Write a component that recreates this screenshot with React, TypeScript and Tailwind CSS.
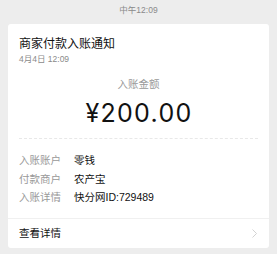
export default function App() {
  const rows = [
    ["入账账户", "零钱"],
    ["付款商户", "农产宝"],
    ["入账详情", "快分网ID:729489"],
  ];
  return (
    <div
      className="h-[254px] w-[277px] overflow-hidden bg-[#ededed] px-2"
      style={{ fontFamily: '"Liberation Sans", "Noto Sans CJK SC", sans-serif' }}
    >
      <div className="pt-[5px] text-center text-[8.5px] leading-[11px] text-[#8a8a8a]">中午12:09</div>
      <div className="mt-[8px] rounded-[3px] bg-white">
        <div className="px-[11px] pt-[12px]">
          <div className="text-[12px] leading-[16px] text-[#111]">商家付款入账通知</div>
          <div className="mt-[2px] text-[8.5px] leading-[11px] text-[#8a8a8a]">4月4日 12:09</div>
          <div className="mt-[13px] text-center text-[10.5px] leading-[13px] text-[#999]">入账金额</div>
          <div
            className="mt-[7px] pl-[1px] text-center text-[25px] leading-[30px] tracking-[1.3px] text-[#111]"
            style={{ fontFamily: 'Inter, "Liberation Sans", sans-serif' }}
          >
            ¥200.00
          </div>
          <div className="mt-[10px] border-t border-dashed border-[#e8e8e8]" />
          <div className="flex flex-col gap-[4.5px] pb-[14px] pt-[14px]">
            {rows.map(([k, v]) => (
              <div key={k} className="flex text-[10.5px] leading-[14px]">
                <span className="w-[55px] text-[#999]">{k}</span>
                <span className="text-[#111]">{v}</span>
              </div>
            ))}
          </div>
        </div>
        <div className="flex h-[30px] items-center justify-between border-t border-[#f0f0f0] px-[11px]">
          <span className="text-[10.5px] text-[#111]">查看详情</span>
          <svg width="5" height="9" viewBox="0 0 5 9" className="mr-[1px]">
            <path d="M0.5 0.5 L4.5 4.5 L0.5 8.5" fill="none" stroke="#c8c8c8" strokeWidth="0.8" />
          </svg>
        </div>
      </div>
    </div>
  );
}
